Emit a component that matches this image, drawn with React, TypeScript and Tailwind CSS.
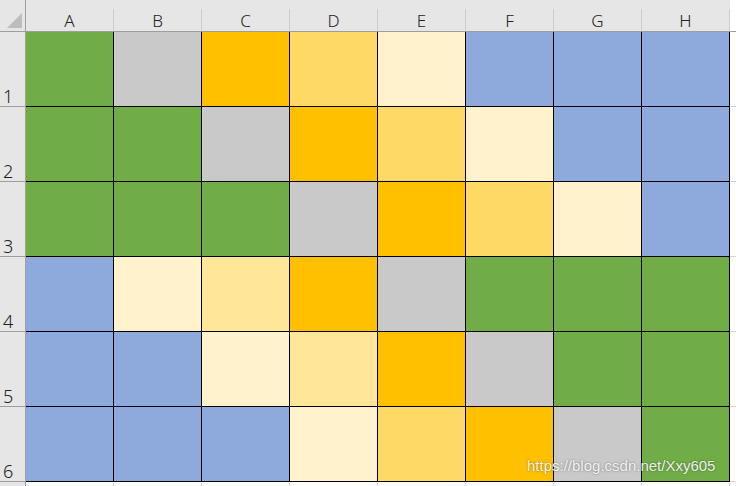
import React from 'react';

const cols = ['A', 'B', 'C', 'D', 'E', 'F', 'G', 'H'];

// fill colours, written out so tailwind picks them up
const fill: Record<string, string> = {
  g: 'bg-[#70ad47]',
  r: 'bg-[#c9c9c9]',
  o: 'bg-[#ffc000]',
  d: 'bg-[#ffd966]',
  l: 'bg-[#ffe699]',
  c: 'bg-[#fff2cc]',
  b: 'bg-[#8ea9db]',
};

const rows = [
  ['g', 'r', 'o', 'd', 'c', 'b', 'b', 'b'],
  ['g', 'g', 'r', 'o', 'd', 'c', 'b', 'b'],
  ['g', 'g', 'g', 'r', 'o', 'd', 'c', 'b'],
  ['b', 'c', 'l', 'o', 'r', 'g', 'g', 'g'],
  ['b', 'b', 'c', 'l', 'o', 'r', 'g', 'g'],
  ['b', 'b', 'b', 'c', 'd', 'o', 'r', 'g'],
];

const font = { fontFamily: '"Noto Sans", "Liberation Sans", "Noto Sans CJK SC", sans-serif' };

export default function App() {
  return (
    <div className="relative w-[736px] h-[486px] overflow-hidden bg-white text-[#222]" style={font}>
      {/* Column headers */}
      <div className="flex h-[32px] bg-[#e6e6e6] border-b border-[#9e9e9e]">
        <div className="w-[26px] shrink-0 border-r border-[#9e9e9e] relative">
          <svg className="absolute left-[7px] top-[13px]" width="16" height="15" viewBox="0 0 16 15">
            <polygon points="15,0 15,15 0,15" fill="#bdbdbd" />
          </svg>
        </div>
        {cols.map((c) => (
          <div key={c} className="w-[88px] shrink-0 flex flex-col">
            <div className="h-[9px]" />
            <div className="flex-1 border-r border-[#cdcdcd] flex items-end justify-center pb-[2px] text-[17px] leading-none font-light">
              {c}
            </div>
          </div>
        ))}
        <div className="flex-1 bg-white" />
      </div>

      {/* Rows */}
      {rows.map((row, i) => (
        <div key={i} className="flex h-[75px]">
          <div className="w-[26px] shrink-0 bg-[#e6e6e6] border-r border-b border-[#9e9e9e] flex items-end pl-[3px] pb-[1px] text-[18px] leading-none font-light">
            {i + 1}
          </div>
          {row.map((k, j) => (
            <div key={j} className={`w-[88px] shrink-0 border-r border-b border-black ${fill[k]}`} />
          ))}
          <div className="flex-1 border-b border-[#d4d4d4]" />
        </div>
      ))}

      {/* next empty row, cut off by the window */}
      <div className="flex h-[20px]">
        <div className="w-[26px] shrink-0 bg-[#e6e6e6] border-r border-[#9e9e9e]" />
        {cols.map((c) => (
          <div key={c} className="w-[88px] shrink-0 border-r border-[#d4d4d4]" />
        ))}
      </div>

      {/* watermark */}
      <div
        className="absolute left-[527px] top-[458px] text-[15px] leading-none text-white/90 [text-shadow:0_0_2px_rgba(0,0,0,0.5)]"
        style={{ fontFamily: '"Liberation Sans", Arial, sans-serif' }}
      >
        https://blog.csdn.net/Xxy605
      </div>
    </div>
  );
}
